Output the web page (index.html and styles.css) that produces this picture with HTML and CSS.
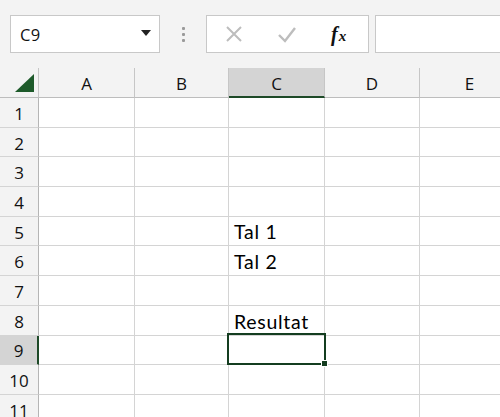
FILE: index.html
```html
<!DOCTYPE html>
<html>
<head>
<meta charset="utf-8">
<link rel="stylesheet" href="styles.css">
</head>
<body>
<div class="app">
  <div class="toolbar">
    <div class="namebox">
      <span class="ref">C9</span>
      <svg class="caret" width="10" height="6" viewBox="0 0 10 6"><path d="M0 0H10L5 6Z" fill="#222"/></svg>
    </div>
    <div class="grip"><span></span><span></span><span></span></div>
    <div class="fbtns">
      <svg class="ico" width="18" height="18" viewBox="0 0 18 18"><path d="M2 2L16 16M16 2L2 16" stroke="#bdbdbd" stroke-width="2" fill="none"/></svg>
      <svg class="ico" width="20" height="18" viewBox="0 0 20 18"><path d="M2 9L8 15L18 2" stroke="#bdbdbd" stroke-width="2.4" fill="none"/></svg>
      <span class="fx"><span class="f">f</span><span class="x">x</span></span>
    </div>
    <div class="formula"></div>
  </div>
  <div class="sheet">
    <div class="corner"><svg width="19" height="18" viewBox="0 0 19 18"><path d="M19 0V18H0Z" fill="#1d5a2a"/></svg></div>
    <div class="ch">A</div><div class="ch">B</div><div class="ch sel">C</div><div class="ch">D</div><div class="ch">E</div>

    <div class="rh">1</div><div class="c"></div><div class="c"></div><div class="c"></div><div class="c"></div><div class="c"></div>
    <div class="rh">2</div><div class="c"></div><div class="c"></div><div class="c"></div><div class="c"></div><div class="c"></div>
    <div class="rh">3</div><div class="c"></div><div class="c"></div><div class="c"></div><div class="c"></div><div class="c"></div>
    <div class="rh">4</div><div class="c"></div><div class="c"></div><div class="c"></div><div class="c"></div><div class="c"></div>
    <div class="rh">5</div><div class="c"></div><div class="c"></div><div class="c">Tal 1</div><div class="c"></div><div class="c"></div>
    <div class="rh">6</div><div class="c"></div><div class="c"></div><div class="c">Tal 2</div><div class="c"></div><div class="c"></div>
    <div class="rh">7</div><div class="c"></div><div class="c"></div><div class="c"></div><div class="c"></div><div class="c"></div>
    <div class="rh">8</div><div class="c"></div><div class="c"></div><div class="c">Resultat</div><div class="c"></div><div class="c"></div>
    <div class="rh sel">9</div><div class="c"></div><div class="c"></div><div class="c active"><span class="handle"></span></div><div class="c"></div><div class="c"></div>
    <div class="rh">10</div><div class="c"></div><div class="c"></div><div class="c"></div><div class="c"></div><div class="c"></div>
    <div class="rh">11</div><div class="c"></div><div class="c"></div><div class="c"></div><div class="c"></div><div class="c"></div>
  </div>
</div>
</body>
</html>
```
FILE: styles.css
```css
html, body {
  margin: 0;
  padding: 0;
  background: #f3f3f3;
}
.app {
  width: 500px;
  height: 417px;
  overflow: hidden;
  font-family: "Open Sans", "Noto Sans", sans-serif;
  color: #111;
}
.toolbar {
  height: 68px;
  box-sizing: border-box;
  padding: 15px 0 0 10px;
  display: flex;
  align-items: flex-start;
  background: #f3f3f3;
}
.namebox {
  width: 150px;
  height: 38px;
  box-sizing: border-box;
  background: #fff;
  border: 1px solid #c8c8c8;
  display: flex;
  align-items: center;
  justify-content: space-between;
  padding: 0 8px 0 9px;
}
.ref {
  font-size: 16.5px;
  letter-spacing: 0.3px;
}
.caret { margin-top: -2px; }
.grip {
  width: 46px;
  height: 38px;
  display: flex;
  flex-direction: column;
  align-items: center;
  justify-content: center;
  gap: 3px;
}
.grip span {
  width: 3px;
  height: 3px;
  background: #9a9a9a;
  border-radius: 1px;
}
.fbtns {
  width: 163px;
  height: 38px;
  box-sizing: border-box;
  background: #fff;
  border: 1px solid #c8c8c8;
  display: flex;
  align-items: center;
  padding-left: 18px;
}
.fbtns .ico:first-child { margin-right: 34px; }
.fbtns .ico:nth-child(2) { margin-right: 34px; margin-top: 2px; }
.fx {
  font-family: "Liberation Serif", "DejaVu Serif", serif;
  font-style: italic;
  font-weight: bold;
  color: #111;
  display: flex;
  align-items: baseline;
}
.fx .f { font-size: 20px; }
.fx .x { font-size: 15px; margin-left: 1px; }
.formula {
  margin-left: 6px;
  flex: 1;
  height: 38px;
  box-sizing: border-box;
  background: #fff;
  border: 1px solid #c8c8c8;
  border-right: none;
}
.sheet {
  display: grid;
  grid-template-columns: 39px 96px 94px 96px 95px 100px;
  grid-template-rows: 30px repeat(11, 29.7px);
  background: #fff;
}
.corner {
  background: #f3f3f3;
  border-right: 1px solid #c6c6c6;
  border-bottom: 1px solid #bdbdbd;
  display: flex;
  align-items: flex-end;
  justify-content: flex-end;
  padding: 0 4px 5px 0;
}
.ch {
  background: #f3f3f3;
  border-right: 1px solid #c6c6c6;
  border-bottom: 1px solid #bdbdbd;
  display: flex;
  align-items: center;
  justify-content: center;
  font-size: 17px;
  padding-top: 2px;
}
.ch.sel {
  background: #d4d4d4;
  border-bottom: 2px solid #1e4a28;
}
.rh {
  background: #f3f3f3;
  border-right: 1px solid #b5b5b5;
  border-bottom: 1px solid #d4d4d4;
  display: flex;
  align-items: center;
  justify-content: center;
  font-size: 17px;
  padding-top: 2px;
}
.rh.sel {
  background: #d4d4d4;
  border-right: 2px solid #1e4a28;
}
.c {
  border-right: 1px solid #d4d4d4;
  border-bottom: 1px solid #d4d4d4;
  font-family: Lato, "Open Sans", sans-serif;
  font-size: 19.5px;
  letter-spacing: 0.7px;
  color: #000;
  display: flex;
  align-items: flex-end;
  padding: 0 0 2px 5px;
  white-space: nowrap;
  min-width: 0;
}
.c.active {
  position: relative;
}
.c.active::after {
  content: "";
  position: absolute;
  left: -2px;
  top: -3px;
  right: -2px;
  bottom: -1px;
  border: 2px solid #143d20;
}
.handle {
  position: absolute;
  right: -4px;
  bottom: -3px;
  width: 5px;
  height: 5px;
  background: #143d20;
  border: 1px solid #fff;
  z-index: 2;
}
```
